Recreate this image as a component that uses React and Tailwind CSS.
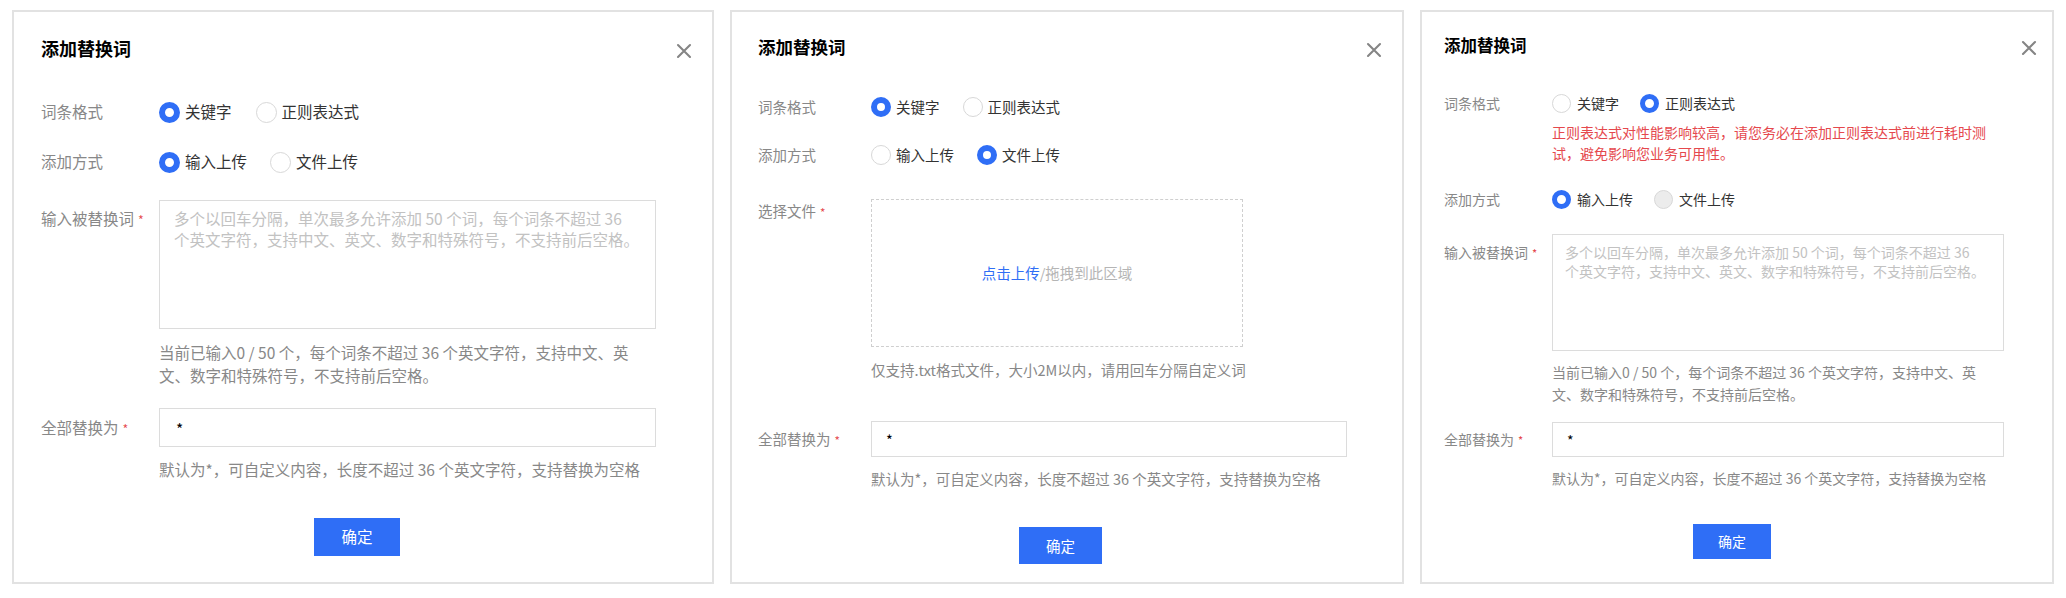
import React from "react";

function CloseIcon({ className }) {
  return (
    <svg viewBox="0 0 16 16" className={className} fill="none" stroke="#858585" strokeWidth="2.1" strokeLinecap="round">
      <path d="M2 2L14 14M14 2L2 14" />
    </svg>
  );
}

function Radio({ checked, disabled, size, ring }) {
  if (checked) {
    return <span className={`${size} ${ring} rounded-full border-[#2f6ef6] bg-white shrink-0`} />;
  }
  return (
    <span
      className={`${size} rounded-full border border-[#d8d8d8] shrink-0 ${disabled ? "bg-[#ececec]" : "bg-white"}`}
    />
  );
}

function RadioGroup({ items, value, size, ring, gap, itemGap, disabledIdx }) {
  return (
    <div className={`flex items-center ${gap}`}>
      {items.map((it, i) => (
        <label key={it} className={`flex items-center ${itemGap} text-[#333]`}>
          <Radio checked={i === value} disabled={i === disabledIdx} size={size} ring={ring} />
          <span>{it}</span>
        </label>
      ))}
    </div>
  );
}

function Req() {
  return <span className="text-[#e5484d] ml-[4px] text-[0.8em]">*</span>;
}

export default function App() {
  return (
    <div className="w-[2066px] h-[598px] bg-white flex gap-[16px] pl-[12px] pt-[10px] font-['Noto_Sans_CJK_SC',sans-serif]">
      {/* 关键字 + 输入上传 */}
      <section className="w-[702px] h-[574px] border-2 border-[#e2e2e2] bg-white flex flex-col">
        <header className="flex items-start justify-between pt-[24px] pl-[27px] pr-[20px]">
          <h2 className="text-[18px] leading-[24px] font-bold text-black">添加替换词</h2>
          <CloseIcon className="w-[16px] h-[16px] mt-[7px]" />
        </header>

        <div className="pl-[27px] mt-[41px] text-[15.5px]">
          <div className="flex items-center h-[22px]">
            <span className="w-[118px] text-[#888]">词条格式</span>
            <RadioGroup items={["关键字", "正则表达式"]} value={0} size="w-[21px] h-[21px]" ring="border-[6px]" gap="gap-[24px]" itemGap="gap-[5px]" />
          </div>
          <div className="flex items-center h-[22px] mt-[28px]">
            <span className="w-[118px] text-[#888]">添加方式</span>
            <RadioGroup items={["输入上传", "文件上传"]} value={0} size="w-[21px] h-[21px]" ring="border-[6px]" gap="gap-[23px]" itemGap="gap-[5px]" />
          </div>
          <div className="flex items-start mt-[27px]">
            <span className="w-[118px] pt-[8px] leading-[21px] text-[#888]">
              输入被替换词<Req />
            </span>
            <textarea
              readOnly
              className="w-[497px] h-[129px] border border-[#dcdcdc] pl-[14px] pr-[8px] pt-[7px] leading-[21px] resize-none outline-none placeholder:text-[#c2c2c2]"
              placeholder={"多个以回车分隔，单次最多允许添加 50 个词，每个词条不超过 36\n个英文字符，支持中文、英文、数字和特殊符号，不支持前后空格。"}
            />
          </div>
          <p className="ml-[118px] mt-[12px] leading-[23px] text-[#888] whitespace-nowrap">
            当前已输入0 / 50 个，每个词条不超过 36 个英文字符，支持中文、英
            <br />
            文、数字和特殊符号，不支持前后空格。
          </p>
          <div className="flex items-start mt-[21px]">
            <span className="w-[118px] pt-[9px] leading-[21px] text-[#888]">
              全部替换为<Req />
            </span>
            <input readOnly value="*" className="w-[497px] h-[39px] border border-[#dcdcdc] pl-[16px] text-black outline-none" />
          </div>
          <p className="ml-[118px] mt-[11px] leading-[23px] text-[#888] whitespace-nowrap">
            默认为*，可自定义内容，长度不超过 36 个英文字符，支持替换为空格
          </p>
        </div>

        <div className="flex justify-center mt-[37px] pr-[12px]">
          <button className="w-[86px] h-[38px] bg-[#2f6ef6] text-white text-[15.5px]">确定</button>
        </div>
      </section>

      {/* 关键字 + 文件上传 */}
      <section className="w-[674px] h-[574px] border-2 border-[#e2e2e2] bg-white flex flex-col">
        <header className="flex items-start justify-between pt-[23px] pl-[26px] pr-[20px]">
          <h2 className="text-[17.5px] leading-[24px] font-bold text-black">添加替换词</h2>
          <CloseIcon className="w-[16px] h-[16px] mt-[7px]" />
        </header>

        <div className="pl-[26px] mt-[38px] text-[14.5px]">
          <div className="flex items-center h-[20px]">
            <span className="w-[113px] text-[#888]">词条格式</span>
            <RadioGroup items={["关键字", "正则表达式"]} value={0} size="w-[20px] h-[20px]" ring="border-[6px]" gap="gap-[23px]" itemGap="gap-[5px]" />
          </div>
          <div className="flex items-center h-[20px] mt-[28px]">
            <span className="w-[113px] text-[#888]">添加方式</span>
            <RadioGroup items={["输入上传", "文件上传"]} value={1} size="w-[20px] h-[20px]" ring="border-[6px]" gap="gap-[23px]" itemGap="gap-[5px]" />
          </div>
          <div className="flex items-start mt-[34px]">
            <span className="w-[113px] pt-[2px] leading-[20px] text-[#888]">
              选择文件<Req />
            </span>
            <div className="w-[372px] h-[148px] border border-dashed border-[#cfcfcf] flex items-center justify-center">
              <span className="text-[#2f6ef6]">点击上传</span>
              <span className="text-[#b5b5b5]">/拖拽到此区域</span>
            </div>
          </div>
          <p className="ml-[113px] mt-[12px] leading-[22px] text-[#888] whitespace-nowrap">
            仅支持.txt格式文件，大小2M以内，请用回车分隔自定义词
          </p>
          <div className="flex items-start mt-[40px]">
            <span className="w-[113px] pt-[8px] leading-[20px] text-[#888]">
              全部替换为<Req />
            </span>
            <input readOnly value="*" className="w-[476px] h-[36px] border border-[#dcdcdc] pl-[14px] text-black outline-none" />
          </div>
          <p className="ml-[113px] mt-[11px] leading-[22px] text-[#888] whitespace-nowrap">
            默认为*，可自定义内容，长度不超过 36 个英文字符，支持替换为空格
          </p>
        </div>

        <div className="flex justify-center mt-[37px] pr-[13px]">
          <button className="w-[83px] h-[37px] bg-[#2f6ef6] text-white text-[14.5px]">确定</button>
        </div>
      </section>

      {/* 正则表达式 */}
      <section className="w-[634px] h-[574px] border-2 border-[#e2e2e2] bg-white flex flex-col">
        <header className="flex items-start justify-between pt-[22px] pl-[22px] pr-[15px]">
          <h2 className="text-[16.5px] leading-[22px] font-bold text-black">添加替换词</h2>
          <CloseIcon className="w-[16px] h-[16px] mt-[6px]" />
        </header>

        <div className="pl-[22px] mt-[38px] text-[14px]">
          <div className="flex items-center h-[19px]">
            <span className="w-[108px] text-[#888]">词条格式</span>
            <RadioGroup items={["关键字", "正则表达式"]} value={1} size="w-[19px] h-[19px]" ring="border-[5px]" gap="gap-[21px]" itemGap="gap-[6px]" />
          </div>
          <p className="ml-[108px] mt-[9px] leading-[21px] text-[#e5484d] whitespace-nowrap">
            正则表达式对性能影响较高，请您务必在添加正则表达式前进行耗时测
            <br />
            试，避免影响您业务可用性。
          </p>
          <div className="flex items-center h-[20px] mt-[25px]">
            <span className="w-[108px] text-[#888]">添加方式</span>
            <RadioGroup items={["输入上传", "文件上传"]} value={0} disabledIdx={1} size="w-[19px] h-[19px]" ring="border-[5px]" gap="gap-[21px]" itemGap="gap-[6px]" />
          </div>
          <div className="flex items-start mt-[25px]">
            <span className="w-[108px] pt-[8px] leading-[20px] text-[#888]">
              输入被替换词<Req />
            </span>
            <textarea
              readOnly
              className="w-[452px] h-[117px] border border-[#dcdcdc] pl-[12px] pr-[8px] pt-[8px] leading-[19px] resize-none outline-none placeholder:text-[#c2c2c2]"
              placeholder={"多个以回车分隔，单次最多允许添加 50 个词，每个词条不超过 36\n个英文字符，支持中文、英文、数字和特殊符号，不支持前后空格。"}
            />
          </div>
          <p className="ml-[108px] mt-[10px] leading-[22px] text-[#888] whitespace-nowrap">
            当前已输入0 / 50 个，每个词条不超过 36 个英文字符，支持中文、英
            <br />
            文、数字和特殊符号，不支持前后空格。
          </p>
          <div className="flex items-start mt-[17px]">
            <span className="w-[108px] pt-[7px] leading-[20px] text-[#888]">
              全部替换为<Req />
            </span>
            <input readOnly value="*" className="w-[452px] h-[35px] border border-[#dcdcdc] pl-[14px] text-black outline-none" />
          </div>
          <p className="ml-[108px] mt-[10px] leading-[22px] text-[#888] whitespace-nowrap">
            默认为*，可自定义内容，长度不超过 36 个英文字符，支持替换为空格
          </p>
        </div>

        <div className="flex justify-center mt-[35px] pr-[10px]">
          <button className="w-[78px] h-[35px] bg-[#2f6ef6] text-white text-[14px]">确定</button>
        </div>
      </section>
    </div>
  );
}
